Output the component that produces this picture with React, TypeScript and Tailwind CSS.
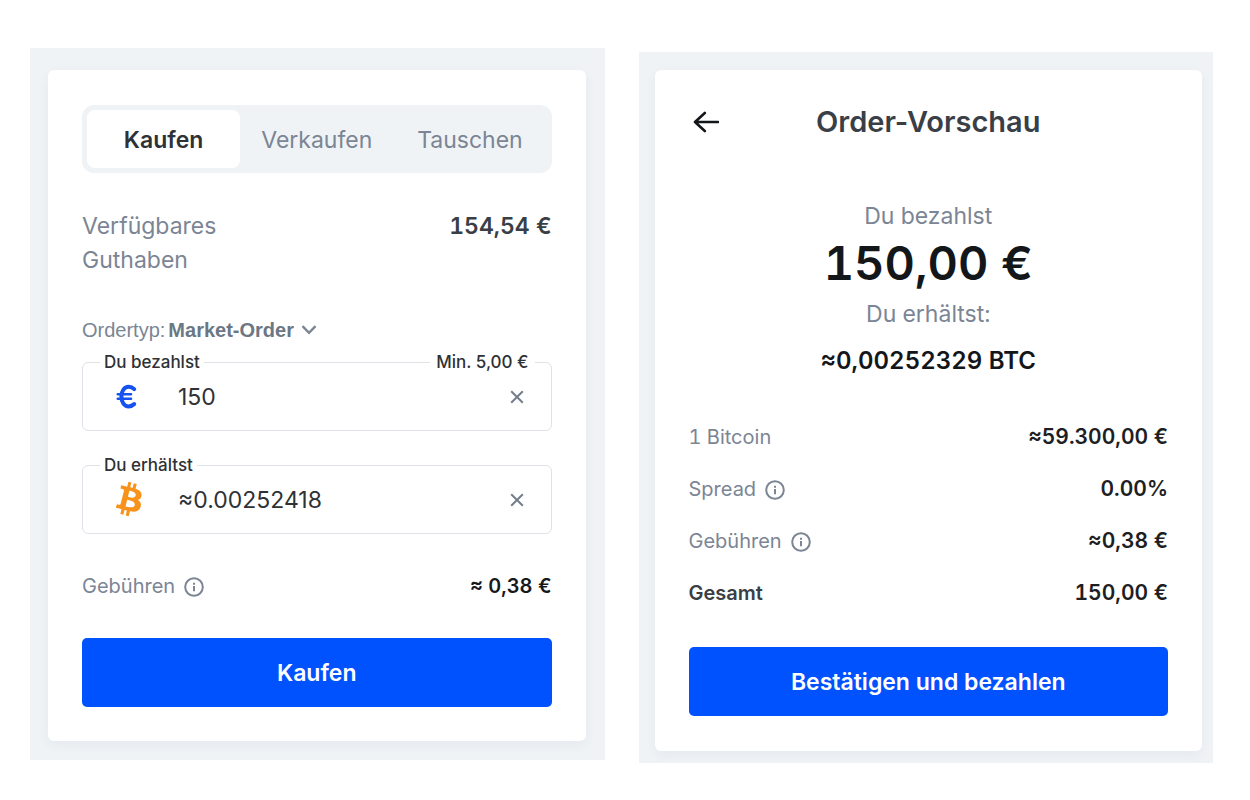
import { useState } from 'react'

const TABS = ['Kaufen', 'Verkaufen', 'Tauschen']

export default function App() {
	return (
		<main className="grid grid-cols-2 items-start gap-[34px] bg-white pt-12 pr-[37px] pl-[30px] font-['Inter',sans-serif]">
			<BuyPanel />
			<PreviewPanel />
		</main>
	)
}

function BuyPanel() {
	const [tab, setTab] = useState('Kaufen')
	const [pay, setPay] = useState('150')
	const [receive, setReceive] = useState('≈0.00252418')

	return (
		<section className="bg-[#eff3f6] pt-[22px] pr-[19px] pb-[19px] pl-[18px]">
			<div className="rounded-md bg-white px-[34px] pt-[35px] pb-[34px] shadow-[0_4px_12px_rgba(40,60,90,0.05)]">
				<div className="grid grid-cols-3 rounded-xl bg-[#eff3f6] p-[5px]" role="tablist">
					{TABS.map(name => (
						<button
							key={name}
							type="button"
							role="tab"
							aria-selected={tab === name}
							onClick={() => setTab(name)}
							className={`h-[58px] rounded-lg pt-0.5 text-[23px] ${
								tab === name ? 'bg-white font-semibold text-[#2e3138]' : 'text-[#7b8594]'
							}`}
						>
							{name}
						</button>
					))}
				</div>

				<div className="mt-9 flex justify-between text-[23px] leading-[34px]">
					<span className="w-40 text-[#7b8594]">Verfügbares Guthaben</span>
					<span className="font-semibold text-[#3a3f45] tabular-nums">154,54 €</span>
				</div>

				<div className="mt-[39px] flex h-7 items-center gap-[3px] font-['Liberation_Sans',sans-serif] text-xl text-[#7b8594]">
					<label htmlFor="order-type">Ordertyp:</label>
					<select id="order-type" className="appearance-none bg-transparent font-bold text-[#6b7785]">
						<option>Market-Order</option>
					</select>
					<svg viewBox="0 0 16 10" className="ml-1 h-[10px] w-4" fill="none" stroke="currentColor" strokeWidth="2.4">
						<path d="M1.5 1.2 8 7.8l6.5-6.6" />
					</svg>
				</div>

				<div className="mt-[18px] space-y-[34px]">
					<AmountField id="pay" label="Du bezahlst" hint="Min. 5,00 €" icon={<EuroIcon />} value={pay} onChange={setPay} />
					<AmountField id="receive" label="Du erhältst" icon={<BitcoinIcon />} value={receive} onChange={setReceive} />
				</div>

				<div className="mt-9 flex h-8 items-center justify-between text-xl">
					<span className="flex items-center gap-[9px] text-[#7b8594]">
						Gebühren
						<InfoIcon />
					</span>
					<span className="font-semibold text-[#16191c] tabular-nums">≈ 0,38 €</span>
				</div>

				<PrimaryButton className="mt-9">Kaufen</PrimaryButton>
			</div>
		</section>
	)
}

function PreviewPanel() {
	return (
		<section className="mt-1 bg-[#eff3f6] pt-[18px] pr-[11px] pb-3 pl-4">
			<div className="rounded-md bg-white px-[34px] pt-[34px] pb-[35px] shadow-[0_4px_12px_rgba(40,60,90,0.05)]">
				<header className="grid grid-cols-[34px_1fr_34px] items-center">
					<button type="button" aria-label="Zurück" className="flex justify-center text-[#14171a]">
						<svg viewBox="0 0 26 22" className="h-[22px] w-[26px]" fill="none" stroke="currentColor" strokeWidth="2.6">
							<path d="M11.8 2 2 11l9.8 9M2 11h23" strokeLinecap="round" strokeLinejoin="round" />
						</svg>
					</button>
					<h1 className="text-center text-[29px] leading-9 font-semibold text-[#3a3f47]">Order-Vorschau</h1>
				</header>

				<div className="mt-[60px] text-center text-[23px] leading-8 text-[#7b8594] tabular-nums">
					<p>Du bezahlst</p>
					<p className="text-[47px] leading-[62px] font-semibold text-[#14171a]">150,00 €</p>
					<p className="mt-1">Du erhältst:</p>
					<p className="mt-[15px] text-2xl leading-8 font-semibold text-[#14171a]">≈0,00252329 BTC</p>
				</div>

				<dl className="mt-[34px] text-xl tabular-nums">
					<Row label="1 Bitcoin" value="≈59.300,00 €" />
					<Row label="Spread" value="0.00%" info />
					<Row label="Gebühren" value="≈0,38 €" info />
					<Row label="Gesamt" value="150,00 €" strong />
				</dl>

				<PrimaryButton className="mt-7">Bestätigen und bezahlen</PrimaryButton>
			</div>
		</section>
	)
}

type RowProps = {
	label: string
	value: string
	info?: boolean
	strong?: boolean
}

function Row({ label, value, info, strong }: RowProps) {
	return (
		<div className="flex h-[52px] items-center justify-between">
			<dt className={`flex items-center gap-[9px] ${strong ? 'font-semibold text-[#3a3f45]' : 'text-[#7b8594]'}`}>
				{label}
				{info && <InfoIcon />}
			</dt>
			<dd className="text-[21px] font-semibold text-[#1d2023]">{value}</dd>
		</div>
	)
}

type AmountFieldProps = {
	id: string
	label: string
	hint?: string
	icon: React.ReactNode
	value: string
	onChange: (value: string) => void
}

function AmountField({ id, label, hint, icon, value, onChange }: AmountFieldProps) {
	return (
		<div className="relative flex h-[69px] items-center rounded-md border border-[#dfe3e7] pr-[25px] pl-7">
			<label htmlFor={id} className="absolute -top-3 left-[17px] bg-white px-1 text-[17px] leading-[22px] font-medium text-[#2e3135]">
				{label}
			</label>
			{hint && (
				<span className="absolute -top-3 right-4 bg-white px-1.5 text-[17px] leading-[22px] font-medium text-[#2e3135]">
					{hint}
				</span>
			)}
			<span className="flex w-9 justify-center">{icon}</span>
			<input
				id={id}
				value={value}
				onChange={e => onChange(e.target.value)}
				className="ml-[31px] min-w-0 flex-1 bg-transparent pt-0.5 text-[23px] text-[#2e3135] outline-none"
			/>
			<button type="button" aria-label="Löschen" onClick={() => onChange('')} className="p-0.5 text-[#747e8b]">
				<svg viewBox="0 0 14 14" className="size-[14px]" fill="none" stroke="currentColor" strokeWidth="2">
					<path d="m1.2 1.2 11.6 11.6M12.8 1.2 1.2 12.8" />
				</svg>
			</button>
		</div>
	)
}

function PrimaryButton({ className, children }: { className: string; children: React.ReactNode }) {
	return (
		<button type="button" className={`h-[69px] w-full rounded-[5px] bg-[#0052ff] pt-0.5 text-[23px] font-semibold text-white ${className}`}>
			{children}
		</button>
	)
}

function InfoIcon() {
	return (
		<svg viewBox="0 0 20 20" className="mt-0.5 size-5" fill="none" stroke="currentColor" strokeWidth="2">
			<circle cx="10" cy="10" r="8.8" />
			<path d="M10 9v5.2M10 5.8v2" />
		</svg>
	)
}

function EuroIcon() {
	return (
		<svg viewBox="0 0 26 26" className="h-[26px] w-[26px]" fill="none" stroke="#1652f0" strokeLinecap="round">
			<path d="M18.2 5.2C16.6 3.600 14.700 2.800 12.600 2.800 8.300 2.800 5.400 7 5.400 12.600S8.300 22.400 12.600 22.400c2.100 0 4-.8 5.600-2.400" strokeWidth="4" />
			<path d="M1.800 10.200h13.200M1.800 14.800h13.200" strokeWidth="2.600" />
		</svg>
	)
}

function BitcoinIcon() {
	return (
		<svg viewBox="6 4.300 11.500 15.400" className="h-[35px] w-[26px]" fill="#f7931a">
			<path d="M17.288 10.291c.24-1.59-.974-2.45-2.64-3.03l.54-2.153-1.315-.33-.525 2.107c-.345-.087-.705-.167-1.064-.25l.526-2.127-1.32-.33-.54 2.165c-.285-.067-.565-.132-.84-.2l-1.815-.45-.35 1.407s.975.225.955.236c.535.136.63.486.615.766l-1.477 5.92c-.075.166-.24.406-.614.314.015.02-.96-.24-.96-.24l-.66 1.51 1.71.426.93.242-.54 2.19 1.32.327.54-2.17c.36.1.705.19 1.05.273l-.51 2.154 1.32.33.545-2.19c2.24.427 3.93.257 4.64-1.774.57-1.637-.03-2.58-1.217-3.196.854-.193 1.5-.76 1.68-1.93h.01zm-3.01 4.22c-.404 1.64-3.157.75-4.05.53l.72-2.9c.896.23 3.757.67 3.33 2.37zm.41-4.24c-.37 1.49-2.662.735-3.405.55l.654-2.64c.744.18 3.137.524 2.75 2.084v.006z" />
		</svg>
	)
}
